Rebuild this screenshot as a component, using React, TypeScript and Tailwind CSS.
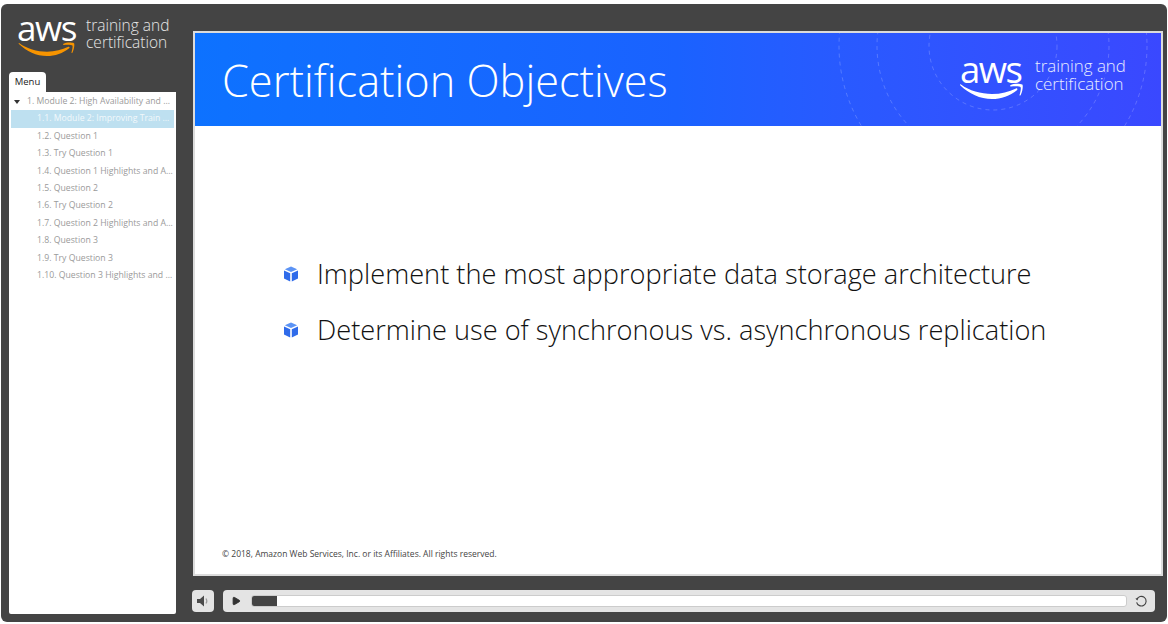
import { Play } from "lucide-react";

const FONT = "font-['Open_Sans','Noto_Sans',sans-serif]";

const items = [
  "1.2. Question 1",
  "1.3. Try Question 1",
  "1.4. Question 1 Highlights and Answers",
  "1.5. Question 2",
  "1.6. Try Question 2",
  "1.7. Question 2 Highlights and Answers",
  "1.8. Question 3",
  "1.9. Try Question 3",
  "1.10. Question 3 Highlights and Answers",
];

function Smile({ color, className }: { color: string; className: string }) {
  return (
    <svg viewBox="0 0 64 18" className={className} fill={color}>
      <path d="M1 2.5C9 8.5 21 12 32 12c9 0 17-2 24-5.5 1.2-.6 2 .8.9 1.7C50 13.8 41 17 32 17 20 17 9 11.5 .4 3.4c-.7-.7-.1-1.4.6-.9z" />
      <path d="M50.5 3.2c3-1.7 9-1.7 11.8-.7.9.4.6 6-1.6 10.5-.5 1-1.4.7-1.1-.2.8-2.6 1.6-6.6 1-7.6-.7-1-5.2-1.1-9.6-.8-1 .1-1.3-.6-.5-1.2z" />
    </svg>
  );
}

function Cube({ className }: { className: string }) {
  return (
    <svg viewBox="0 0 16 16" className={className}>
      <path d="M8 .5l6.2 2.7L8 5.9 1.8 3.2z" fill="#5b93f5" />
      <path d="M1 4.5l6.2 2.7V15.5L1 12.6z" fill="#2f6bea" />
      <path d="M15 4.5L8.8 7.2V15.5l6.2-2.9z" fill="#2f6bea" />
    </svg>
  );
}

function Rings() {
  return (
    <svg viewBox="0 0 338 93" className="absolute top-0 right-0 h-[93px] w-[338px]" fill="none" stroke="#ffffff" strokeOpacity="0.2" strokeWidth="1" strokeDasharray="4 4">
      <circle cx="170" cy="13" r="64" />
      <circle cx="170" cy="13" r="116" />
      <circle cx="170" cy="13" r="154" />
    </svg>
  );
}

export default function App() {
  return (
    <div className={`${FONT} h-[624px] w-[1168px] overflow-hidden bg-white pt-[4px] pr-[1px] pb-[2px] pl-[1px]`}>
      <div className="flex h-full rounded-[6px] bg-[#444444]">
        <aside className="flex w-[182px] shrink-0 flex-col pt-[10px] pb-[8px] pl-[8px]">
          <div className="flex h-[47px] items-start pl-[8px]">
            <div className="relative h-[42px] w-[60px]">
              <div className="text-[35px] leading-[28px] font-medium tracking-[-1.4px] text-white">aws</div>
              <Smile color="#f79400" className="absolute top-[27px] left-0 h-[16px] w-[60px]" />
            </div>
            <div className="ml-[9px] pt-[3px] text-[15.5px] leading-[16.5px] font-light whitespace-nowrap text-[#e6e6e6]">
              <div>training and</div>
              <div>certification</div>
            </div>
          </div>
          <div className="mt-[11px] flex h-[20px] w-[37px] items-center justify-center rounded-t-[4px] bg-white text-[9.5px] text-[#222222]">
            Menu
          </div>
          <div className="w-[167px] flex-1 rounded-b-[2px] bg-white px-[2px] pt-[1px] text-[8.7px] leading-[17.4px] text-[#9a9a9a]">
            <div className="flex h-[17.4px] items-center">
              <span className="ml-[3px] h-0 w-0 border-x-[3px] border-t-[4px] border-x-transparent border-t-[#333333]" />
              <span className="ml-[7px] w-[144px] truncate">1. Module 2: High Availability and Resiliency</span>
            </div>
            <div className="h-[17.4px] truncate bg-[#bee0f0] pl-[26px] text-[#f2f8fb]">
              1.1. Module 2: Improving Train Service Reliability
            </div>
            {items.map((item) => (
              <div key={item} className="h-[17.4px] truncate pl-[26px]">
                {item}
              </div>
            ))}
          </div>
        </aside>

        <main className="flex min-w-0 flex-1 flex-col pt-[27px] pr-[4px] pl-[10px]">
          <section className="flex h-[545px] flex-col border-2 border-[#dcdcdc] bg-white">
            <header className="relative flex h-[93px] shrink-0 items-center overflow-hidden bg-gradient-to-r from-[#0d72ff] via-[#1a62ff] to-[#3a48ff] pt-[3px] pl-[27px]">
              <Rings />
              <h1 className="text-[43.3px] font-light text-white">Certification Objectives</h1>
              <div className="absolute top-[22px] left-[765px] h-[44px] w-[64px]">
                <div className="text-[36.5px] leading-[28px] font-medium tracking-[-1.5px] text-white">aws</div>
                <Smile color="#ffffff" className="absolute top-[27px] left-0 h-[18px] w-[64px]" />
              </div>
              <div className="absolute top-[24px] left-[840px] text-[16.9px] leading-[17.5px] font-light whitespace-nowrap text-[#e8ecff]">
                <div>training and</div>
                <div>certification</div>
              </div>
            </header>
            <div className="flex flex-1 flex-col">
              <ul className="mt-[129px] flex flex-col gap-[19px] pl-[88px] text-[27.2px] leading-[37px] font-light text-[#111111]">
                <li className="flex items-center whitespace-nowrap">
                  <Cube className="mr-[18px] h-[16px] w-[16px]" />
                  Implement the most appropriate data storage architecture
                </li>
                <li className="flex items-center whitespace-nowrap">
                  <Cube className="mr-[18px] h-[16px] w-[16px]" />
                  Determine use of synchronous vs. asynchronous replication
                </li>
              </ul>
              <p className="mt-auto mb-[14px] pl-[27px] text-[8.5px] leading-[12px] text-[#444444]">
                © 2018, Amazon Web Services, Inc. or its Affiliates. All rights reserved.
              </p>
            </div>
          </section>

          <div className="mt-[14px] mr-[8px] -ml-[1px] flex h-[22px] gap-[9px]">
            <button className="flex w-[22px] items-center justify-center rounded-[4px] bg-[#e4e4e4]">
              <svg viewBox="0 0 14 12" className="h-[12px] w-[14px]">
                <path d="M1 4h3l4-3.5v11L4 8H1z" fill="#4a4a4a" />
                <path d="M10 3.5c1 1.5 1 3.5 0 5" fill="none" stroke="#9a9a9a" strokeWidth="1.2" />
              </svg>
            </button>
            <div className="flex flex-1 items-center rounded-[4px] bg-[#e4e4e4]">
              <Play className="ml-[8px] h-[10px] w-[10px] shrink-0" fill="#333333" stroke="#333333" />
              <div className="ml-[10px] h-[12px] flex-1 overflow-hidden rounded-[3px] border border-[#cccccc] bg-white">
                <div className="h-full w-[25px] bg-[#444444]" />
              </div>
              <svg viewBox="0 0 16 16" className="mx-[7px] h-[14px] w-[14px] shrink-0" fill="none" stroke="#444444" strokeWidth="1.3">
                <path d="M3.2 6.2A5.5 5.5 0 1 1 3 9.5" />
                <path d="M1.6 5.2l2.2 2.2 1.2-2.8z" fill="#444444" stroke="none" />
              </svg>
            </div>
          </div>
        </main>
      </div>
    </div>
  );
}
